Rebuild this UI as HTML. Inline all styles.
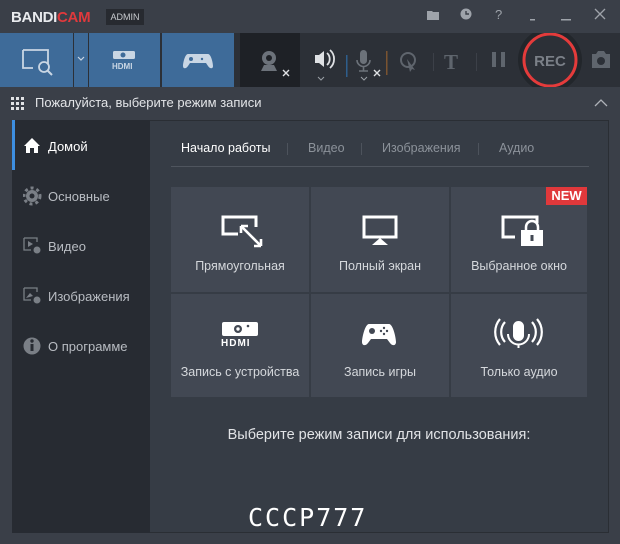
<!DOCTYPE html>
<html><head><meta charset="utf-8"><style>
*{margin:0;padding:0;box-sizing:border-box}
body{width:620px;height:544px;background:#3a3f48;font-family:"Liberation Sans","Noto Sans CJK SC",sans-serif;position:relative;overflow:hidden;color:#d6d9de}
.a{position:absolute}
.blue{background:#3e6b99}
.t{font-size:12.5px;color:#d5d8dc;text-align:center;width:100%;position:absolute;left:0}
.tile{position:absolute;background:#424853}
.side{font-size:13px;color:#b8bcc2}
</style></head><body>
<div class="a" style="left:11px;top:9px;font-weight:bold;font-size:15px;letter-spacing:-0.3px;color:#e9ebee">BANDI<span style="color:#e0393c">CAM</span></div>
<div class="a" style="left:106px;top:9px;width:38px;height:16px;background:#272a30;font-size:9px;color:#c9ccd0;text-align:center;line-height:16px">ADMIN</div>
<svg class="a" style="left:426px;top:8px" width="180" height="14" viewBox="0 0 180 14">
<path d="M1 3h5l1 1h6v8H1z" fill="#9ea3aa"/>
<circle cx="40" cy="6" r="5.5" fill="#9ea3aa"/><path d="M40 3v3h3" stroke="#3a3f48" stroke-width="1.4" fill="none"/>
<text x="69" y="11" font-size="13" fill="#9ea3aa" font-family="Liberation Sans">?</text>
<rect x="104" y="11" width="5" height="1.5" fill="#9ea3aa"/>
<rect x="135" y="11" width="10" height="1.5" fill="#9ea3aa"/>
<path d="M169 1l10 10M179 1l-10 10" stroke="#9ea3aa" stroke-width="1.3"/>
</svg>
<div class="a" style="left:0;top:33px;width:620px;height:54px;background:#2c3037"></div>
<div class="a blue" style="left:0;top:33px;width:73px;height:54px"></div>
<div class="a blue" style="left:74px;top:33px;width:14px;height:54px"></div>
<div class="a blue" style="left:89px;top:33px;width:71px;height:54px"></div>
<div class="a blue" style="left:162px;top:33px;width:72px;height:54px"></div>
<svg class="a" style="left:0;top:33px" width="240" height="54">
<path d="M23 17h25v14M23 17v18h10" stroke="#c9d6e4" stroke-width="1.8" fill="none"/>
<circle cx="44" cy="34" r="5" stroke="#c9d6e4" stroke-width="1.8" fill="none"/><path d="M48 38l4 4" stroke="#c9d6e4" stroke-width="2"/>
<path d="M78 24l3 3 3-3" stroke="#c9d6e4" stroke-width="1.2" fill="none"/>
<rect x="113" y="18" width="22" height="8" rx="1.5" fill="#c9d6e4"/><circle cx="123" cy="22" r="2.5" fill="#3e6b99"/>
<text x="112" y="36" font-size="8" font-weight="bold" fill="#c9d6e4" font-family="Liberation Sans">HDMI</text>
<path d="M186 21h22c3 0 5 9 5 12 0 3-3 3-5 0l-2-3h-16l-2 3c-2 3-5 3-5 0 0-3 2-12 5-12z" fill="#c9d6e4"/>
<circle cx="191" cy="26" r="2" fill="#3e6b99"/><circle cx="202" cy="26" r="1.2" fill="#3e6b99"/>
</svg>
<div class="a" style="left:240px;top:33px;width:60px;height:54px;background:#1e2126"></div>
<svg class="a" style="left:240px;top:33px" width="380" height="54">
<circle cx="29" cy="25" r="7" fill="#6c727a"/><circle cx="29" cy="25" r="3" fill="#1e2126"/><path d="M21 38l3-6h10l3 6z" fill="#6c727a"/>
<path d="M43 37l6 6M49 37l-6 6" stroke="#dfe1e4" stroke-width="1.4"/>
<path d="M75 22h4l5-4v16l-5-4h-4z" fill="#dfe1e4"/><path d="M87 20a8 8 0 010 12M90 17a12 12 0 010 18" stroke="#dfe1e4" stroke-width="1.8" fill="none"/>
<path d="M78 44l3 3 3-3" stroke="#9aa0a6" fill="none"/>
<rect x="106" y="22" width="1.5" height="22" fill="#2e5e8c"/>
<rect x="120" y="17" width="7" height="14" rx="3.5" fill="#6c727a"/><path d="M117 27a6.5 6.5 0 0013 0M123.5 34v4M119 38h9" stroke="#6c727a" stroke-width="1.6" fill="none"/>
<path d="M121 44l3 3 3-3" stroke="#9aa0a6" fill="none"/>
<path d="M134 37l6 6M140 37l-6 6" stroke="#dfe1e4" stroke-width="1.4"/>
<rect x="146" y="18" width="1.5" height="24" fill="#7a5330"/>
<circle cx="168" cy="27" r="7" stroke="#5f656d" stroke-width="2" fill="none"/><path d="M167 26l8 11-3-1-2 3z" fill="#5f656d"/>
<rect x="193" y="20" width="1" height="18" fill="#3c4048"/>
<text x="204" y="36" font-size="21" font-weight="bold" fill="#5f656d" font-family="Liberation Serif">T</text>
<rect x="236" y="20" width="1" height="18" fill="#3c4048"/>
<rect x="252" y="19" width="4" height="15" fill="#5f656d"/><rect x="261" y="19" width="4" height="15" fill="#5f656d"/>
<circle cx="310" cy="27" r="32" fill="#22262b"/>
<circle cx="310" cy="27" r="26" stroke="#e43b3b" stroke-width="3" fill="#2c3037"/>
<text x="310" y="33" text-anchor="middle" font-size="15" font-weight="bold" fill="#7b8088" font-family="Liberation Sans">REC</text>
<path d="M352 21h4l2-3h6l2 3h4v14h-18z" fill="#5f656d"/><circle cx="361" cy="28" r="4" fill="#2c3037"/>
</svg>
<svg class="a" style="left:11px;top:97px" width="13" height="13"><g fill="#e0e2e5"><rect x="0" y="0" width="3" height="3"/><rect x="5" y="0" width="3" height="3"/><rect x="10" y="0" width="3" height="3"/><rect x="0" y="5" width="3" height="3"/><rect x="5" y="5" width="3" height="3"/><rect x="10" y="5" width="3" height="3"/><rect x="0" y="10" width="3" height="3"/><rect x="5" y="10" width="3" height="3"/><rect x="10" y="10" width="3" height="3"/></g></svg>
<div class="a" style="left:35px;top:95px;font-size:13px;color:#e3e5e8">Пожалуйста, выберите режим записи</div>
<svg class="a" style="left:594px;top:98px" width="14" height="10"><path d="M1 8l6-6 6 6" stroke="#aeb2b8" stroke-width="1.3" fill="none"/></svg>
<div class="a" style="left:12px;top:120px;width:597px;height:413px;background:#363c45;border:1px solid #2a2e34"></div>
<div class="a" style="left:12px;top:120px;width:138px;height:413px;background:#272b32"></div>
<div class="a" style="left:12px;top:120px;width:3px;height:50px;background:#3d8ee0"></div>
<svg class="a" style="left:23px;top:137px" width="20" height="220">
<path d="M1 9L9 1l8 8h-2v7h-4v-5H7v5H3V9z" fill="#fff"/>
<g transform="translate(9,59)" fill="#7a7f86"><circle r="6"/><circle r="8" fill="none" stroke="#7a7f86" stroke-width="3" stroke-dasharray="3 3"/><circle r="2.5" fill="#272b32"/></g>
<path d="M1 101h13v4M1 101v12h7" stroke="#7a7f86" stroke-width="1.3" fill="none"/><path d="M5 104l5 3-5 3z" fill="#7a7f86"/><circle cx="14" cy="113" r="3.5" fill="#7a7f86"/>
<path d="M1 151h13v4M1 151v12h7" stroke="#7a7f86" stroke-width="1.3" fill="none"/><path d="M3 161l4-5 3 3z" fill="#7a7f86"/><circle cx="14" cy="163" r="3.5" fill="#7a7f86"/>
<circle cx="9" cy="209" r="8.5" fill="#7a7f86"/><rect x="7.5" y="207" width="3" height="7" fill="#272b32"/><circle cx="9" cy="204" r="1.7" fill="#272b32"/>
</svg>
<div class="a side" style="left:48px;top:139px;color:#fff">Домой</div>
<div class="a side" style="left:48px;top:189px">Основные</div>
<div class="a side" style="left:48px;top:239px">Видео</div>
<div class="a side" style="left:48px;top:289px">Изображения</div>
<div class="a side" style="left:48px;top:339px">О программе</div>
<div class="a" style="left:181px;top:141px;font-size:12.5px;color:#fff">Начало работы</div>
<div class="a" style="left:287px;top:143px;width:1px;height:12px;background:#4d535c"></div>
<div class="a" style="left:308px;top:141px;font-size:12.5px;color:#8c929a">Видео</div>
<div class="a" style="left:361px;top:143px;width:1px;height:12px;background:#4d535c"></div>
<div class="a" style="left:382px;top:141px;font-size:12.5px;color:#8c929a">Изображения</div>
<div class="a" style="left:478px;top:143px;width:1px;height:12px;background:#4d535c"></div>
<div class="a" style="left:499px;top:141px;font-size:12.5px;color:#8c929a">Аудио</div>
<div class="a" style="left:171px;top:166px;width:418px;height:1px;background:#4f555e"></div>
<div class="tile" style="left:171px;top:187px;width:138px;height:105px"><div class="t" style="top:72px">Прямоугольная</div></div>
<div class="tile" style="left:311px;top:187px;width:138px;height:105px"><div class="t" style="top:72px">Полный экран</div></div>
<div class="tile" style="left:451px;top:187px;width:136px;height:105px"><div class="t" style="top:72px">Выбранное окно</div></div>
<div class="tile" style="left:171px;top:294px;width:138px;height:103px"><div class="t" style="top:71px">Запись с устройства</div></div>
<div class="tile" style="left:311px;top:294px;width:138px;height:103px"><div class="t" style="top:71px">Запись игры</div></div>
<div class="tile" style="left:451px;top:294px;width:136px;height:103px"><div class="t" style="top:71px">Только аудио</div></div>
<div class="a" style="left:546px;top:187px;width:41px;height:18px;background:#e0383b;color:#fff;font-weight:bold;font-size:13px;text-align:center;line-height:18px">NEW</div>
<svg class="a" style="left:160px;top:180px" width="440" height="220">
<path d="M78 54H63V37h33v10" stroke="#fff" stroke-width="3" fill="none"/>
<path d="M81 46l20 20M81 46h7M81 46v7M101 66h-7M101 66v-7" stroke="#fff" stroke-width="2.6" fill="none"/>
<rect x="204" y="37" width="32" height="20" stroke="#fff" stroke-width="3" fill="none"/><path d="M212 65l8-7 8 7z" fill="#fff"/>
<path d="M355 57h-12V37h34v6" stroke="#fff" stroke-width="3" fill="none"/>
<path d="M366 50v-3a6 6 0 0112 0v3" stroke="#fff" stroke-width="2.5" fill="none"/><rect x="361" y="50" width="22" height="16" fill="#fff"/><rect x="370.5" y="55" width="3" height="6" fill="#424853"/>
<rect x="62" y="142" width="36" height="14" rx="2" fill="#fff"/><circle cx="78" cy="149" r="4" fill="#424853"/><circle cx="78" cy="149" r="1.7" fill="#fff"/><circle cx="88" cy="146" r="1.3" fill="#424853"/>
<text x="61" y="166" font-size="10" font-weight="bold" fill="#fff" font-family="Liberation Sans" letter-spacing="1">HDMI</text>
<path d="M209 144h20c4 0 7 14 7 18 0 4-4 4-6 1l-3-4h-16l-3 4c-2 3-6 3-6-1 0-4 3-18 7-18z" fill="#fff"/>
<circle cx="212" cy="151" r="3" fill="#424853"/><g fill="#424853"><circle cx="224" cy="148" r="1.2"/><circle cx="224" cy="154" r="1.2"/><circle cx="221" cy="151" r="1.2"/><circle cx="227" cy="151" r="1.2"/></g>
<rect x="353" y="141" width="11" height="20" rx="5.5" fill="#fff"/>
<path d="M348 154a10 10 0 0021 0M358.5 164v4" stroke="#fff" stroke-width="2" fill="none"/>
<path d="M345 142a15 15 0 000 20M340 139a20 20 0 000 26M372 142a15 15 0 010 20M377 139a20 20 0 010 26" stroke="#fff" stroke-width="2.2" fill="none"/>
</svg>
<div class="a" style="left:150px;top:427px;width:458px;text-align:center;font-size:14.5px;color:#e1e3e6">Выберите режим записи для использования:</div>
<div class="a" style="left:248px;top:505px;font-family:'DejaVu Sans Mono',monospace;font-size:25px;color:#fff;letter-spacing:2px;line-height:25px">CCCP777</div>
</body></html>
